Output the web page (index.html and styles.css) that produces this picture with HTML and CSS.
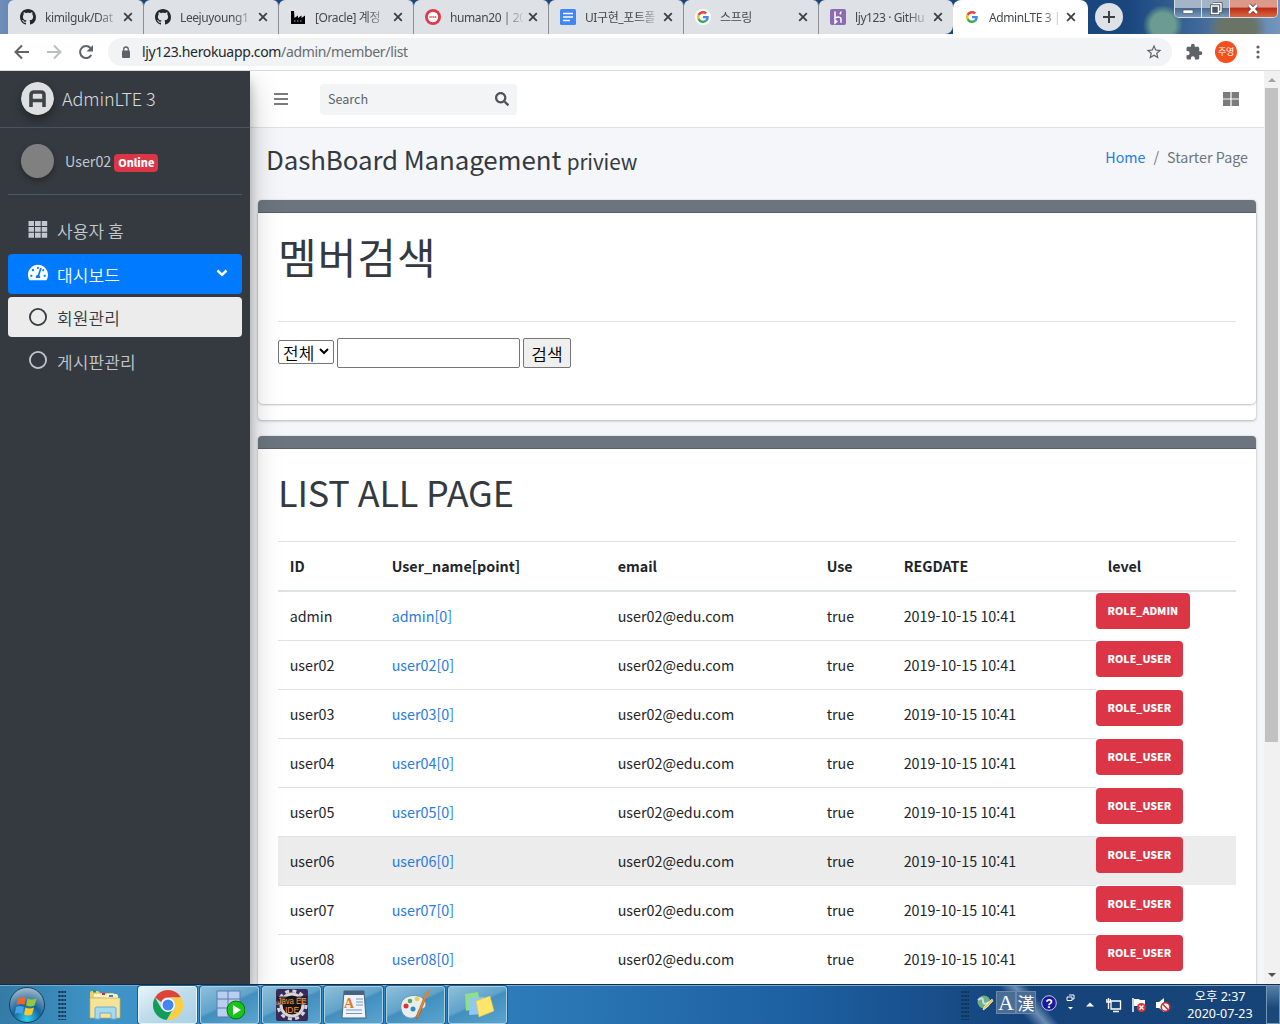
FILE: index.html
```html
<!DOCTYPE html>
<html lang="ko">
<head>
<meta charset="utf-8">
<title>AdminLTE 3 | Starter</title>
<link rel="stylesheet" href="styles.css">
</head>
<body>
<svg class="defs" width="0" height="0">
  <symbol id="github" viewBox="0 0 16 16"><path fill="#24292e" d="M8 0C3.58 0 0 3.58 0 8c0 3.54 2.29 6.53 5.47 7.59.4.07.55-.17.55-.38 0-.19-.01-.82-.01-1.49-2.01.37-2.53-.49-2.69-.94-.09-.23-.48-.94-.82-1.13-.28-.15-.68-.52-.01-.53.63-.01 1.08.58 1.23.82.72 1.21 1.87.87 2.33.66.07-.52.28-.87.51-1.07-1.78-.2-3.64-.89-3.64-3.95 0-.87.31-1.59.82-2.15-.08-.2-.36-1.02.08-2.12 0 0 .67-.21 2.2.82.64-.18 1.32-.27 2-.27s1.36.09 2 .27c1.53-1.04 2.2-.82 2.2-.82.44 1.1.16 1.92.08 2.12.51.56.82 1.27.82 2.15 0 3.07-1.87 3.75-3.65 3.95.29.25.54.73.54 1.48 0 1.07-.01 1.93-.01 2.2 0 .21.15.46.55.38A8.01 8.01 0 0 0 16 8c0-4.42-3.58-8-8-8z"/></symbol>
  <symbol id="google" viewBox="0 0 48 48"><path fill="#ea4335" d="M24 9.5c3.54 0 6.71 1.22 9.21 3.6l6.85-6.85C35.9 2.38 30.47 0 24 0 14.62 0 6.51 5.38 2.56 13.22l7.98 6.19C12.43 13.72 17.74 9.5 24 9.5z"/><path fill="#4285f4" d="M46.98 24.55c0-1.57-.15-3.09-.38-4.55H24v9.02h12.94c-.58 2.96-2.26 5.48-4.78 7.18l7.73 6c4.51-4.18 7.09-10.36 7.09-17.65z"/><path fill="#fbbc05" d="M10.53 28.59c-.48-1.45-.76-2.99-.76-4.59s.27-3.14.76-4.59l-7.98-6.19C.92 16.46 0 20.12 0 24s.92 7.54 2.56 10.78l7.97-6.19z"/><path fill="#34a853" d="M24 48c6.48 0 11.93-2.13 15.89-5.81l-7.73-6c-2.15 1.45-4.92 2.3-8.16 2.3-6.26 0-11.57-4.22-13.47-9.91l-7.98 6.19C6.51 42.62 14.62 48 24 48z"/></symbol>
  <symbol id="x" viewBox="0 0 10 10"><path d="M1.2 1.2l7.6 7.6M8.800 1.2l-7.600 7.600" stroke="#3c4043" stroke-width="1.8"/></symbol>
  <symbol id="ring" viewBox="0 0 20 20"><circle cx="10" cy="10" r="8.1" fill="none" stroke="currentColor" stroke-width="1.800"/></symbol>
</svg>
<div class="screen">
  <div class="tabs">
    <div class="tab first"><svg class="fav"><use href="#github"/></svg><span class="tt">kimilguk/Dat</span><svg class="close"><use href="#x"/></svg></div>
    <div class="tab"><svg class="fav"><use href="#github"/></svg><span class="tt">Leejuyoung1</span><svg class="close"><use href="#x"/></svg></div>
    <div class="tab"><svg class="fav" viewBox="0 0 16 16"><path d="M1 15V2h3l.5 7L8 6.500V9l3.500-2.500V9L15 6.500V15z"/><path d="M4 12h9" stroke="#aaa" stroke-dasharray="1.500 1.500"/></svg><span class="tt">[Oracle] 계정</span><svg class="close"><use href="#x"/></svg></div>
    <div class="tab"><svg class="fav" viewBox="0 0 16 16"><circle cx="8" cy="8" r="6.600" fill="#fff" stroke="#de3b48" stroke-width="2.800"/><path d="M4.500 8h7" stroke="#de3b48" stroke-width="1.600" stroke-dasharray="1.300 .5"/></svg><span class="tt">human20 | 20</span><svg class="close"><use href="#x"/></svg></div>
    <div class="tab"><svg class="fav" viewBox="0 0 16 16"><rect width="16" height="16" rx="1.500" fill="#4285f4"/><path d="M3 4.500h10M3 8h10M3 11.500h7" stroke="#fff" stroke-width="1.600"/></svg><span class="tt">UI구현_포트폴</span><svg class="close"><use href="#x"/></svg></div>
    <div class="tab"><svg class="fav" viewBox="0 0 16 16"><circle cx="8" cy="8" r="8" fill="#fff"/><use href="#google" x="2" y="2" width="12" height="12"/></svg><span class="tt">스프링</span><svg class="close"><use href="#x"/></svg></div>
    <div class="tab last"><svg class="fav" viewBox="0 0 16 16"><rect width="16" height="16" rx="2" fill="#8d6bb0"/><path d="M5 2.500v6.500c3-1.400 6-1.200 6 .8v4M11 2.500c0 1.300-.5 2-1.200 2.800M5 11v3l1.700-1.500z" fill="none" stroke="#fff" stroke-width="1.500"/></svg><span class="tt">ljy123 · GitHu</span><svg class="close"><use href="#x"/></svg></div>
    <div class="tab active"><svg class="fav" viewBox="0 0 16 16"><use href="#google" x="2" y="2" width="12" height="12"/></svg><span class="tt">AdminLTE 3 |</span><svg class="close"><use href="#x"/></svg></div>
    <div class="newtab"><svg width="14" height="14"><path d="M7 1v12M1 7h12" stroke="#3c4043" stroke-width="2"/></svg></div>
    <div class="wincontrols">
      <span class="wc min"><svg width="12" height="12"><rect x="1" y="7" width="10" height="3.500" fill="#fff" stroke="#445" stroke-width=".6"/></svg></span>
      <span class="wc max"><svg width="14" height="14"><path d="M4 1.500h8v8h-2M2.500 4h7v7.500h-7z" fill="none" stroke="#445" stroke-width="3"/><path d="M4 1.500h8v8h-2M2.500 4h7v7.500h-7z" fill="#456" stroke="#fff" stroke-width="1.500"/></svg></span>
      <span class="wc shut"><svg width="14" height="12"><path d="M3 2l8 8M11 2l-8 8" stroke="#633" stroke-width="4"/><path d="M3 2l8 8M11 2l-8 8" stroke="#fff" stroke-width="2.500"/></svg></span>
    </div>
  </div>
  <div class="toolbar">
    <svg class="nav" viewBox="0 0 16 16"><path d="M15 8H2M8 1.500L1.500 8 8 14.500" fill="none" stroke="#5f6368" stroke-width="2"/></svg>
    <svg class="nav" viewBox="0 0 16 16"><path d="M1 8h13M8 1.500L14.500 8 8 14.500" fill="none" stroke="#bcbec1" stroke-width="2"/></svg>
    <svg class="nav" viewBox="0 0 16 16"><path d="M13.300 11A6 6 0 1 1 12.500 4" fill="none" stroke="#5f6368" stroke-width="2"/><path d="M15 1v6.500H8.500z" fill="#5f6368"/></svg>
    <div class="omni">
      <svg width="10" height="13" viewBox="0 0 10 13"><rect x="1" y="4.500" width="8" height="7.500" rx="1" fill="#5f6368"/><path d="M2.700 5V3.300a2.300 2.300 0 0 1 4.600 0V5" fill="none" stroke="#5f6368" stroke-width="1.300"/></svg>
      <span class="url"><b>ljy123.herokuapp.com</b>/admin/member/list</span>
      <svg class="star" width="18" height="18" viewBox="0 0 24 24"><path fill="#5f6368" d="M22 9.240l-7.190-.62L12 2 9.190 8.630 2 9.240l5.460 4.730L5.820 21 12 17.270 18.180 21l-1.630-7.030L22 9.240zM12 15.400l-3.760 2.270 1-4.280-3.320-2.880 4.380-.38L12 6.100l1.710 4.040 4.380.38-3.320 2.880 1 4.280L12 15.400z"/></svg>
    </div>
    <svg class="ext" width="18" height="18" viewBox="0 0 24 24"><path fill="#5f6368" d="M20.500 11H19V7c0-1.100-.9-2-2-2h-4V3.500a2.500 2.500 0 0 0-5 0V5H4c-1.100 0-1.990.9-1.990 2v3.800H3.500a2.700 2.700 0 0 1 0 5.400H2V20c0 1.100.9 2 2 2h3.800v-1.500a2.700 2.700 0 0 1 5.400 0V22H17c1.100 0 2-.9 2-2v-4h1.500a2.500 2.500 0 0 0 0-5z"/></svg>
    <span class="avatar">주영</span>
    <svg class="dots" width="4" height="14"><circle cx="2" cy="2" r="1.600"/><circle cx="2" cy="7" r="1.600"/><circle cx="2" cy="12" r="1.600"/></svg>
  </div>
  <div class="page">
    <aside class="sidebar">
      <div class="brand"><svg class="logo" viewBox="0 0 33 33"><circle cx="16.500" cy="16.500" r="16.500" fill="#dedfe0"/><path d="M10 25V13q0-3 3-3h7q3 0 3 3v12M10 18.500h13" fill="none" stroke="#3f4449" stroke-width="3.600"/></svg><span>AdminLTE 3</span></div>
      <div class="user"><i class="pic"></i><span>User02</span><b class="online">Online</b></div>
      <nav>
        <a class="item"><svg width="20" height="17" viewBox="0 0 20 17"><path fill="currentColor" d="M.5 0h5.500v4.900H.5zM7 0h5.700v4.900H7zM13.700 0h5.500v4.900h-5.500zM.5 5.900h5.500v4.900H.5zM7 5.900h5.700v4.900H7zM13.700 5.900h5.500v4.900h-5.500zM.5 11.800h5.500v4.900H.5zM7 11.800h5.700v4.900H7zM13.700 11.800h5.500v4.900h-5.500z"/></svg><span>사용자 홈</span></a>
        <a class="item on"><svg width="20" height="18" viewBox="0 32 576 480"><path fill="#fff" d="M288 32C128.940 32 0 160.940 0 320c0 52.800 14.250 102.260 39.060 144.800 5.610 9.620 16.300 15.200 27.440 15.200h443c11.140 0 21.830-5.580 27.440-15.200C561.750 422.260 576 372.800 576 320c0-159.060-128.940-288-288-288zm0 64c14.710 0 26.580 10.130 30.320 23.650-1.110 2.260-2.640 4.230-3.450 6.670l-9.220 27.670c-5.130 3.490-10.970 6.010-17.640 6.010-17.670 0-32-14.330-32-32S270.330 96 288 96zM96 384c-17.670 0-32-14.330-32-32s14.330-32 32-32 32 14.330 32 32-14.330 32-32 32zm48-160c-17.670 0-32-14.330-32-32s14.330-32 32-32 32 14.330 32 32-14.330 32-32 32zm246.770-72.410l-61.330 184C343.130 347.330 352 364.540 352 384c0 11.720-3.380 22.550-8.880 32H232.880c-5.500-9.450-8.880-20.280-8.880-32 0-33.940 26.500-61.430 59.900-63.590l61.340-184.010c4.170-12.560 17.730-19.450 30.360-15.170 12.570 4.190 19.350 17.790 15.170 30.360zm14.660 57.200l15.520-46.550c3.470-1.290 7.130-2.230 11.050-2.230 17.670 0 32 14.330 32 32s-14.330 32-32 32c-11.380-.01-21.250-6.100-26.570-15.220zM480 384c-17.670 0-32-14.330-32-32s14.330-32 32-32 32 14.330 32 32-14.330 32-32 32z"/></svg><span>대시보드</span><svg class="chev" width="12" height="8"><path d="M1.500 1.500L6 5.800l4.500-4.300" fill="none" stroke="#fff" stroke-width="2.500"/></svg></a>
        <a class="item sel"><svg width="20" height="20"><use href="#ring"/></svg><span>회원관리</span></a>
        <a class="item"><svg width="20" height="20"><use href="#ring"/></svg><span>게시판관리</span></a>
      </nav>
    </aside>
    <main>
      <header class="topnav">
        <svg width="14" height="14"><path d="M0 2h14M0 7h14M0 12h14" stroke="#7b7b7b" stroke-width="2"/></svg>
        <div class="search"><span>Search</span><svg width="14" height="14" viewBox="0 0 512 512"><path fill="#4f5356" d="M505 442.700L405.300 343c-4.500-4.500-10.600-7-17-7H372c27.600-35.300 44-79.700 44-128C416 93.100 322.900 0 208 0S0 93.100 0 208s93.100 208 208 208c48.300 0 92.700-16.400 128-44v16.300c0 6.400 2.500 12.500 7 17l99.700 99.700c9.400 9.400 24.600 9.400 33.900 0l28.300-28.300c9.400-9.400 9.400-24.600.1-34zM208 336c-70.700 0-128-57.200-128-128 0-70.700 57.200-128 128-128 70.700 0 128 57.200 128 128 0 70.700-57.200 128-128 128z"/></svg></div>
        <svg class="large" width="16" height="14"><path fill="#7b7b7b" d="M0 0h7.400v6.400H0zM8.600 0H16v6.400H8.600zM0 7.600h7.400V14H0zM8.600 7.600H16V14H8.600z"/></svg>
      </header>
      <div class="heading"><h1>DashBoard Management <small>priview</small></h1><div class="crumbs"><a>Home</a><i>/</i><span>Starter Page</span></div></div>
      <section class="card one">
        <div class="strip"></div>
        <div class="inner">
          <h2 class="ko">멤버검색</h2>
          <div class="form"><div class="select">전체<svg width="10" height="7"><path d="M1 1l4 4 4-4" fill="none" stroke="#000" stroke-width="2"/></svg></div><input type="text"><button>검색</button></div>
        </div>
      </section>
      <section class="card two">
        <div class="strip"></div>
        <div class="list">
          <h2>LIST ALL PAGE</h2>
          <div class="row head"><span>ID</span><span>User_name[point]</span><span>email</span><span>Use</span><span>REGDATE</span><span>level</span></div>
          <div class="row r1"><span>admin</span><a>admin[0]</a><span>user02@edu.com</span><span>true</span><span>2019-10-15 10:41</span><b>ROLE_ADMIN</b></div>
          <div class="row"><span>user02</span><a>user02[0]</a><span>user02@edu.com</span><span>true</span><span>2019-10-15 10:41</span><b>ROLE_USER</b></div>
          <div class="row"><span>user03</span><a>user03[0]</a><span>user02@edu.com</span><span>true</span><span>2019-10-15 10:41</span><b>ROLE_USER</b></div>
          <div class="row"><span>user04</span><a>user04[0]</a><span>user02@edu.com</span><span>true</span><span>2019-10-15 10:41</span><b>ROLE_USER</b></div>
          <div class="row"><span>user05</span><a>user05[0]</a><span>user02@edu.com</span><span>true</span><span>2019-10-15 10:41</span><b>ROLE_USER</b></div>
          <div class="row hover"><span>user06</span><a>user06[0]</a><span>user02@edu.com</span><span>true</span><span>2019-10-15 10:41</span><b>ROLE_USER</b></div>
          <div class="row"><span>user07</span><a>user07[0]</a><span>user02@edu.com</span><span>true</span><span>2019-10-15 10:41</span><b>ROLE_USER</b></div>
          <div class="row"><span>user08</span><a>user08[0]</a><span>user02@edu.com</span><span>true</span><span>2019-10-15 10:41</span><b>ROLE_USER</b></div>
        </div>
      </section>
    </main>
    <div class="scroll"><svg width="17" height="17"><path d="M5 11l4-4 4 4z" fill="#a3a3a3"/></svg><i class="thumb"></i><svg width="17" height="17"><path d="M5 6l4 4 4-4z" fill="#505050"/></svg></div>
  </div>
  <footer class="taskbar">
    <svg class="start" width="38" height="38" viewBox="0 0 38 38"><defs><radialGradient id="orb" cx=".5" cy=".9" r=".9"><stop offset="0" stop-color="#2fd0f0"/><stop offset=".45" stop-color="#14649c"/><stop offset="1" stop-color="#a9bccb"/></radialGradient></defs><circle cx="19" cy="19" r="17.500" fill="url(#orb)" stroke="#16405f"/><path d="M10 13q4-3 8-1l-1.500 7q-4-2-8 0z" fill="#f0642b"/><path d="M19.500 12.500q4 2 9 0l-2 7q-4 2-8.500 0z" fill="#96c83c"/><path d="M8 21q4-2 8 0l-1.700 7q-4-2-7.500 0z" fill="#45a2e6"/><path d="M17.500 21.500q4 2 8.500 0l-2 7q-4 2-8 0z" fill="#fbc62e"/></svg>
    <i class="grip"></i>
    <span class="pin"><svg width="34" height="32" viewBox="0 0 34 32"><path d="M2 4q0-2 2-2h6l2 2h14v24H2z" fill="#e8cf78"/><path d="M5 2.500h3" stroke="#1a9e3c" stroke-width="2"/><path d="M6 8V5h22q2 0 2 2v3z" fill="#fff3c4"/><path d="M14 5h3" stroke="#d23" stroke-width="2"/><path d="M21 7h4" stroke="#38c" stroke-width="2"/><path d="M2 9h30v20H2z" fill="#f7e398" stroke="#c9aa50" stroke-width=".7"/><path d="M7 30V20q0-2 2-2h17q2 0 2 2v10h-5v-6H12v6z" fill="#a4daf1" stroke="#6aa9cf"/></svg></span>
    <span class="task lit"><svg width="30" height="30" viewBox="0 0 48 48"><path fill="#db4437" d="M24 0a24 24 0 0 1 20.800 12H24a12 12 0 0 0-11 7L3.200 12A24 24 0 0 1 24 0z"/><path fill="#0f9d58" d="M3.200 12A24 24 0 0 0 22 48l9-16.300A12 12 0 0 1 13.600 30z"/><path fill="#ffcd40" d="M44.800 12A24 24 0 0 1 22 48l12.400-18A12 12 0 0 0 24 12z"/><circle cx="24" cy="24" r="11" fill="#fff"/><circle cx="24" cy="24" r="8.800" fill="#4285f4"/></svg></span>
    <span class="task"><svg width="30" height="30" viewBox="0 0 30 30"><path d="M2 1h23v26H2z" fill="#b8cff0" stroke="#5c7db0"/><path d="M2 9h23M2 18h23M13 1v26" stroke="#5c7db0"/><circle cx="21" cy="20" r="9" fill="#18c418" stroke="#087308"/><path d="M18 15v10l8-5z" fill="#fff"/></svg></span>
    <span class="task"><svg width="32" height="32" viewBox="0 0 32 32"><rect width="32" height="32" rx="2" fill="#392a57"/><circle cx="16" cy="16" r="11" fill="#171419" stroke="#d7d5d9" stroke-width="3"/><circle cx="16" cy="16" r="14" fill="none" stroke="#d7d5d9" stroke-width="3" stroke-dasharray="4 3.330"/><path d="M1 7.500h30v8H1zM9 15h14v8.500H9z" fill="#171419" opacity=".75"/><text x="1.500" y="15" textLength="29" lengthAdjust="spacingAndGlyphs">Java EE</text><text x="9" y="23.500" textLength="14" lengthAdjust="spacingAndGlyphs">IDE</text></svg></span>
    <span class="task"><svg width="26" height="30" viewBox="0 0 26 30"><path d="M3 1h20l2 27H1z" fill="#eef4fb" stroke="#49657f"/><path d="M3 1h20v4H3z" fill="#48627f"/><path d="M15 9h7M15 12h7M15 15h7M5 20h16M5 23.500h16" stroke="#7796bd"/><text class="wp" x="3" y="18">A</text></svg></span>
    <span class="task"><svg width="32" height="32" viewBox="0 0 32 32"><path d="M1 20C-1 8 12 4 21 8c7 4 6 12 0 12-4 0-2 8-8 9C7 30 2 26 1 20z" fill="#e6eef4" stroke="#7594a9"/><circle cx="6" cy="17" r="2.500" fill="#d33"/><circle cx="10" cy="12" r="2.300" fill="#5a4"/><circle cx="17" cy="10" r="2.300" fill="#ec4"/><circle cx="13" cy="20" r="2.500" fill="#38b"/><path d="M26 9L18 29l-2 1 1-4 7-18z" fill="#e88a31" stroke="#a75a18" stroke-width=".6"/><path d="M23 8q1-6 8-7-1 5-5 9z" fill="#b88d5c"/></svg></span>
    <span class="task"><svg width="34" height="28" viewBox="0 0 34 28"><path d="M4 3l13-2 3 15-15 4z" fill="#8ede8b"/><path d="M9 7l14-1v17l-15 1z" fill="#8fc8f2"/><path d="M15 10l14-5 4 15-15 6z" fill="#ffe66b" stroke="#e1c044" stroke-width=".6"/></svg></span>
    <div class="tray">
      <i class="grip"></i>
      <svg width="18" height="18" viewBox="0 0 18 18"><circle cx="7" cy="8" r="6.500" fill="#6fae7d"/><path d="M1 6q5-4 5 1t6 1" stroke="#c2dfef" stroke-width="2" fill="none"/><path d="M16 7l-8 8-2 1 1-3 8-8z" fill="#f5c443" stroke="#fff" stroke-width=".6"/></svg>
      <span class="ime a">A</span><span class="ime">漢</span>
      <svg class="help" width="16" height="16"><circle cx="8" cy="8" r="7.300" fill="#1919a0" stroke="#c7c7e5"/><text x="4.500" y="12.500">?</text></svg>
      <svg class="rest" width="9" height="18"><path d="M3 1h5v4H6M1 3h5v3.500H1z" fill="none" stroke="#fff"/><path d="M2 13h5l-2.500 2.500z" fill="#fff"/></svg>
      <svg class="up" width="8" height="5"><path d="M0 4.500L4 .5l4 4z" fill="#fff"/></svg>
      <svg class="net" width="16" height="16"><path d="M5 4h9.500v8H5zM7 14.500h6M2.500 1v4M.8 2v3h3.500V2M2.500 5v7" fill="none" stroke="#fff" stroke-width="1.300"/></svg>
      <svg class="flag" width="16" height="16"><path d="M2 1v14" stroke="#fff" stroke-width="1.500"/><path d="M3 2h5l1 1h5v7H9L8 9H3z" fill="#fff"/><circle cx="10.500" cy="10.500" r="4.500" fill="#dc3435"/><path d="M8.500 8.500l4 4M12.500 8.500l-4 4" stroke="#fff" stroke-width="1.500"/></svg>
      <svg class="vol" width="16" height="16"><path d="M1 5h3l5-4v14l-5-4H1z" fill="#fff"/><circle cx="10.500" cy="10" r="4.300" fill="#fff" stroke="#d22e2e" stroke-width="1.600"/><path d="M7.500 7l6 6" stroke="#d22e2e" stroke-width="1.600"/></svg>
      <div class="clock"><span>오후 2:37</span><span>2020-07-23</span></div>
      <i class="peek"></i>
    </div>
  </footer>
</div>
</body>
</html>
```
FILE: styles.css
```css
* { box-sizing: border-box; }
body { margin: 0; font-family: "Noto Sans CJK KR", sans-serif; font-size: 14.300px; color: #212529; }
.defs { display: block; }
.screen { width: 1280px; height: 1024px; display: flex; flex-direction: column; overflow: hidden; background: #fff; }
svg { flex: none; }

.tabs { height: 34px; flex: none; display: flex; background: radial-gradient(circle at 1163px 25px, #6c9c91 0 12px, transparent 20px), radial-gradient(ellipse 30px 22px at 1237px 28px, #697467 0 60%, transparent), linear-gradient(90deg, #6e8eb8 0, #18467d 9%, #18467d 88%, #426b9a 94%, #7595bd); }
.tab { width: 135px; height: 34px; display: flex; align-items: center; padding: 0 10px 0 11px; background: #dee1e6; border-radius: 6px 6px 0 0; border-right: 1px solid #8b8f94; font: 12px "Noto Sans", "Noto Sans CJK KR", sans-serif; letter-spacing: -.4px; color: #45494d; }
.tab.first { width: 136px; margin-left: 8px; padding-left: 12px; }
.tab.last { width: 134px; border: 0; border-radius: 6px 6px 8px 0; }
.tab.active { background: #fff; border: 0; border-radius: 8px 8px 0 0; padding-left: 11px; }
.fav { width: 16px; height: 16px; }
.tt { width: 73px; margin: 0 0 0 9px; white-space: nowrap; -webkit-mask-image: linear-gradient(90deg, #000 72%, rgba(0,0,0,.1)); mask-image: linear-gradient(90deg, #000 72%, rgba(0,0,0,.1)); }
.close { width: 10px; height: 10px; margin-left: auto; }
.tab.active .close { margin-right: 2px; }
.newtab { width: 28px; height: 28px; margin: 3px 0 0 7px; border-radius: 50%; background: #dee1e6; display: flex; align-items: center; justify-content: center; }
.wincontrols { width: 104px; height: 18px; margin-left: 51px; display: flex; border: 1px solid #d3dbe5; border-top: 0; border-radius: 0 0 5px 5px; overflow: hidden; }
.wc { width: 28px; display: flex; align-items: center; justify-content: center; border-right: 1px solid #dbe1e9; background: linear-gradient(#a4b5c8 45%, #486b91 50%, #7898b8); }
.wc.shut { width: 48px; border: 0; background: linear-gradient(#dc9888 40%, #bd2f18 50%, #d86740); }

.toolbar { height: 37px; flex: none; display: flex; align-items: center; padding: 0 20px 0 14px; border-bottom: 1px solid #d9dadc; background: #fff; }
.nav { width: 16px; height: 16px; margin-right: 16px; }
.omni { width: 1064px; height: 28px; margin-left: -2px; padding: 0 9px 0 13px; border-radius: 14px; background: #f1f3f4; display: flex; align-items: center; }
.url { margin: -2px 0 0 11px; font: 14px "Noto Sans", sans-serif; letter-spacing: -.34px; color: #686c70; }
.url b { font-weight: 400; color: #25282b; }
.star { margin-left: auto; }
.ext { margin-left: 13px; }
.avatar { width: 22px; height: 22px; margin-left: 12px; border-radius: 50%; background: #f4511e; color: #fff; font-size: 9px; line-height: 21px; text-align: center; letter-spacing: -.3px; }
.dots { margin-left: auto; fill: #5f6368; }

.page { flex: 1; min-height: 0; display: flex; overflow: hidden; background: #f4f6f9; }
.sidebar { width: 250px; flex: none; position: relative; z-index: 1; background: #343a40; color: #c2c7d0; box-shadow: 0 14px 28px rgba(0,0,0,.25), 0 10px 10px rgba(0,0,0,.22); }
.brand { height: 57px; display: flex; align-items: center; padding: 0 0 2px 21px; border-bottom: 1px solid #4b545c; color: #d8dadc; font-size: 18px; font-weight: 300; letter-spacing: -.1px; word-spacing: -1px; }
.brand span { margin-left: 8px; }
.logo { width: 33px; height: 33px; border-radius: 50%; box-shadow: 0 5px 10px rgba(0,0,0,.35); }
.user { height: 67px; margin: 0 8px; padding-left: 13px; display: flex; align-items: center; border-bottom: 1px solid #4f5962; }
.pic { width: 33px; height: 34px; border-radius: 50%; background: #808080; box-shadow: 0 3px 6px rgba(0,0,0,.3); }
.user span { margin: -2px 0 0 11px; }
.online { margin: 3px 0 0 3px; width: 44px; height: 18px; border-radius: 4px; background: #dc3545; color: #fff; font-size: 10.800px; font-weight: 900; line-height: 17px; text-align: center; }
nav { padding: 15px 8px 0; }
.item { height: 40px; margin-bottom: 3.500px; padding: 0 14px 0 20px; display: flex; align-items: center; border-radius: 4px; font-size: 17px; font-weight: 350; letter-spacing: .1px; word-spacing: -1px; }
.item svg { margin-top: -1px; }
.item span { margin: 1px 0 0 9px; }
.item.on { background: #007bff; color: #fff; }
.item.sel { background: #ececec; color: #343a40; }
.item .chev { margin: -2px 0 0 auto; }

main { width: 1014px; flex: none; }
.topnav { height: 57px; background: #fff; border-bottom: 1px solid #dee2e6; display: flex; align-items: center; padding: 0 25px 0 24px; }
.search { width: 197px; height: 31px; margin-left: 32px; padding: 0 8px; border-radius: 4px; background: #f2f4f6; display: flex; align-items: center; justify-content: space-between; color: #5c6268; font-size: 12.600px; }
.search span { margin-top: -2px; }
.large { margin-left: auto; }
.heading { height: 72px; padding: 0 16px; display: flex; justify-content: space-between; }
h1 { margin: 13px 0 0; font-size: 25.900px; line-height: 36px; font-weight: 400; letter-spacing: -.1px; word-spacing: -1.500px; color: #343a40; }
small { font-size: 20.700px; }
.crumbs { margin-top: 18px; display: flex; line-height: 22px; word-spacing: -.7px; color: #6c757d; }
.crumbs a, .row a { color: #287be0; }
.crumbs i { margin: 0 8px; font-style: normal; }
.card { margin: 0 8px 16px; border-radius: 4px; background: #fff; box-shadow: 0 0 1px rgba(0,0,0,.2), 0 1px 3px rgba(0,0,0,.25); }
.one { height: 220px; }
.strip { height: 13px; border-radius: 4px 4px 0 0; background: #6c757d; border-bottom: 1px solid #596168; }
.inner { height: 191px; padding: 0 20px; border-radius: 0 0 5px 5px; box-shadow: 0 1px 2px rgba(0,0,0,.25); }
h2 { margin: 0; font-weight: 400; color: #343a40; font-size: 36px; letter-spacing: -.15px; word-spacing: -2px; }
h2.ko { height: 109px; padding-top: 12px; font-size: 42px; font-weight: 400; letter-spacing: 1px; line-height: 62px; border-bottom: 1px solid #e1e2e3; }
.form { margin-top: 16px; display: flex; align-items: center; color: #000; }
.select { width: 56px; height: 24px; margin-top: -2px; padding: 2px 4px 0; border: 1px solid #767676; border-radius: 2px; display: flex; align-items: center; justify-content: space-between; font-size: 17px; font-weight: 350; line-height: 22px; }
.select svg { margin-top: -3px; }
.form input { width: 183px; height: 30px; margin: 0 3px; padding: 0; border: 1px solid #767676; border-radius: 2px; }
.form button { width: 48px; height: 30px; padding: 1px 0 0; border: 1px solid #767676; border-radius: 2px; background: #efefef; font: 350 17px/24px "Noto Sans CJK KR", sans-serif; }
.two { height: 620px; }
.list { padding: 0 20px; }
.list h2 { height: 92px; line-height: 84px; }
.row { height: 49px; display: grid; grid-template-columns: 102px 226px 209px 77px 204px 140px; line-height: 48px; word-spacing: -.7px; }
.row > * { padding-left: 11.700px; border-top: 1px solid #dee2e6; }
.row b { justify-self: start; height: 36px; margin-top: 1px; padding: 0 11.500px; border: 0; border-radius: 4px; background: #dc3545; color: #fff; font-size: 10.600px; font-weight: 900; line-height: 35px; }
.row.head { height: 51px; border-bottom: 2px solid #dee2e6; font-weight: 700; line-height: 47px; }
.row.r1 { height: 48px; }
.row.r1 > * { border-top: 0; }
.row.hover { background: #ececec; }
.scroll { width: 16px; flex: none; display: flex; flex-direction: column; background: #f1f1f1; overflow: hidden; }
.scroll svg { margin-left: -1px; }
.thumb { width: 13px; height: 654px; margin: 0 auto auto 1px; background: #c1c1c1; }

.taskbar { height: 40px; flex: none; display: flex; align-items: center; padding-left: 8px; border-top: 1px solid #0d2f4b; box-shadow: inset 0 1px #7ba8c9; background: linear-gradient(50deg, transparent 78.500%, rgba(190,215,235,.5) 79.700%, transparent 80.700%), linear-gradient(90deg, #347ba6 0, #3e95c9 8%, #3a8ac0 25%, #2c79b8 42%, #1d60a2 62%, #15437b 80%, #174477); }
.grip { width: 8px; height: 30px; background: radial-gradient(circle, #12324f 1px, transparent 1.300px) 0 0 / 3px 4px; }
.start + .grip { margin-left: 12px; }
.pin { margin: 0 16px 0 22px; display: flex; }
.task { width: 59px; height: 38px; margin-right: 3px; display: flex; align-items: center; justify-content: center; border: 1px solid #a6d0e6; border-radius: 3px; background: linear-gradient(155deg, #8fbfda, #60a3cb 45%, #428fbe 50%, #5ba5cf); box-shadow: 0 0 0 1px #245b83; }
.task.lit { background: linear-gradient(150deg, #eaf4fa, #bedbea 50%, #a8d1e7); border-color: #e6f5fc; }
.task text { font: 9px "Liberation Sans", sans-serif; fill: #ff9638; }
.task .wp { font: bold 14px "Liberation Serif", serif; fill: #e87722; }
.tray { margin-left: auto; height: 39px; display: flex; align-items: center; color: #fff; }
.tray > svg:first-of-type { margin: 0 1px 3px 8px; }
.ime { width: 20px; height: 23px; margin-bottom: 4px; border: 1px solid #6b88a7; background: #496d96; font-size: 17px; line-height: 21px; text-align: center; }
.ime.a { font-family: "Liberation Serif", serif; font-size: 22px; }
.help { margin: 0 0 4px 5px; }
.help text { font: bold 12px "Liberation Sans", sans-serif; fill: #fff; }
.rest { margin: 0 0 4px 9px; }
.up { margin: 0 0 0 11px; }
.net { margin-left: 12px; }
.flag { margin-left: 9px; }
.vol { margin-left: 8px; }
.clock { width: 80px; margin-left: 9px; display: flex; flex-direction: column; align-items: center; font: 12.500px/17px "Noto Sans", "Noto Sans CJK KR", sans-serif; }
.peek { width: 14px; height: 39px; margin-left: 6px; border: 1px solid #7796b5; background: linear-gradient(#5680aa, #1b4779 60%); }
```
